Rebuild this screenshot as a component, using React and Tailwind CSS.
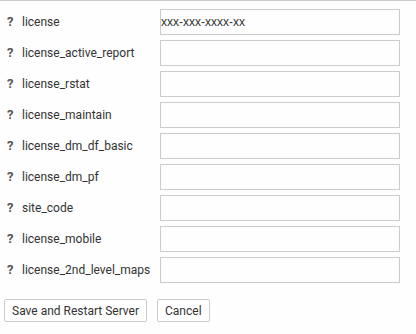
import React from 'react';

const fields = [
  { name: 'license', value: 'xxx-xxx-xxxx-xx' },
  { name: 'license_active_report', value: '' },
  { name: 'license_rstat', value: '' },
  { name: 'license_maintain', value: '' },
  { name: 'license_dm_df_basic', value: '' },
  { name: 'license_dm_pf', value: '' },
  { name: 'site_code', value: '' },
  { name: 'license_mobile', value: '' },
  { name: 'license_2nd_level_maps', value: '' },
];

export default function App() {
  return (
    <div className="w-[416px] h-[334px] bg-[#fdfefd] border-t border-[#cccccc] text-[#333333]" style={{ fontFamily: 'Roboto, "Liberation Sans", sans-serif' }}>
      <div className="flex flex-col gap-[5px] pt-[8px]">
        {fields.map((f) => (
          <div key={f.name} className="flex items-center h-[26px]">
            <span className="w-[22px] pl-[7px] text-[13px] font-bold text-[#555555]">?</span>
            <label className="w-[138px] text-[12px]">{f.name}</label>
            <input
              type="text"
              defaultValue={f.value}
              className="w-[240px] h-[26px] border border-[#cccccc] bg-[#fdfefd] px-0 text-[12px] text-[#333333] outline-none font-['Liberation_Sans',Arial,sans-serif]"
            />
          </div>
        ))}
      </div>
      <div className="flex gap-[10px] pl-[4px] mt-[16px]">
        <button className="h-[23px] px-[7px] border border-[#cccccc] rounded-[2px] bg-white text-[12px] text-[#333333]">
          Save and Restart Server
        </button>
        <button className="h-[23px] px-[7px] border border-[#cccccc] rounded-[2px] bg-white text-[12px] text-[#333333]">
          Cancel
        </button>
      </div>
    </div>
  );
}
